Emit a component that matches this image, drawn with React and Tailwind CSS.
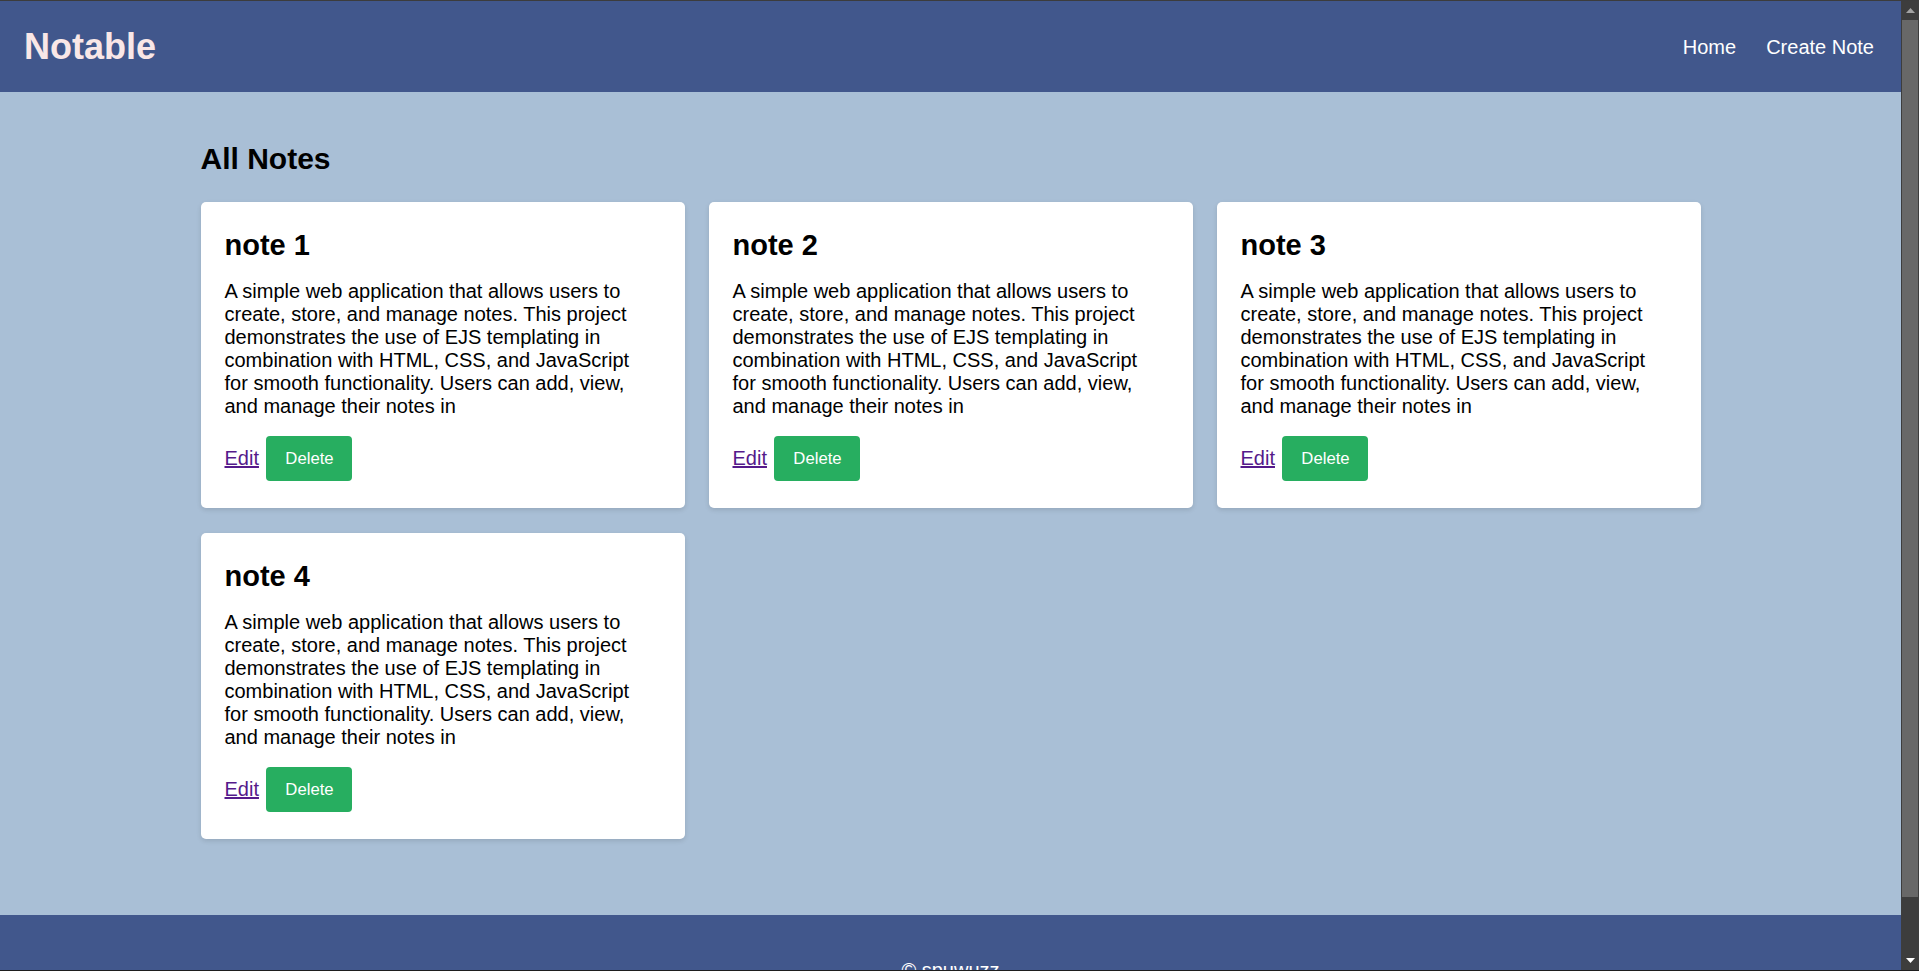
import React from "react";

const DESC =
  "A simple web application that allows users to create, store, and manage notes. This project demonstrates the use of EJS templating in combination with HTML, CSS, and JavaScript for smooth functionality. Users can add, view, and manage their notes in";

const notes = ["note 1", "note 2", "note 3", "note 4"];

function NoteCard({ title }) {
  return (
    <div className="bg-white rounded-[5px] shadow-[0_2px_5px_rgba(0,0,0,0.12)] px-6 pt-6 pb-[27px]">
      <h3 className="mt-[1.5px] text-[29px] leading-[34.5px] font-bold text-black">{title}</h3>
      <p className="mt-[18px] pr-[6px] text-[20px] leading-[23px] text-black">{DESC}</p>
      <div className="mt-[18px] flex items-center gap-[7.5px]">
        <a href="#" className="text-[20px] leading-[23px] text-[#551a8b] underline">
          Edit
        </a>
        <button className="h-[45px] w-[86px] flex items-center justify-center bg-[#27ae60] text-white text-[16.7px] rounded-[4px]">
          Delete
        </button>
      </div>
    </div>
  );
}

function Scrollbar() {
  return (
    <div className="w-[18px] shrink-0 bg-[#3d3d3d] flex flex-col">
      <div className="h-[19px] shrink-0 flex items-center justify-center">
        <svg width="9" height="5" viewBox="0 0 9 5">
          <polygon points="0,5 4.5,0 9,5" fill="#a3a3a3" />
        </svg>
      </div>
      <div className="h-[877px] shrink-0 mx-[1px] bg-[#686868]" />
      <div className="flex-1" />
      <div className="h-[19px] shrink-0 flex items-center justify-center">
        <svg width="9" height="5" viewBox="0 0 9 5">
          <polygon points="0,0 9,0 4.5,5" fill="#ffffff" />
        </svg>
      </div>
    </div>
  );
}

export default function App() {
  return (
    <div className="h-screen flex flex-col bg-[#3c3c3c] font-['Liberation_Sans',Arial,sans-serif]">
      <div className="h-px shrink-0 bg-[#3c3c3c]" />
      <div className="flex-1 min-h-0 flex">
        <div className="flex-1 min-w-0 overflow-hidden bg-[#a9bfd6]">
          <header className="h-[91px] bg-[#41578c] flex items-center justify-between pl-6 pr-[27px]">
            <div className="text-[36px] font-bold text-[#f9e7e7]">Notable</div>
            <nav className="flex items-center gap-[30px] text-[20px] text-white">
              <a href="#">Home</a>
              <a href="#">Create Note</a>
            </nav>
          </header>
          <main className="pt-[50px] pb-[76px]">
            <div className="w-[1500px] mx-auto">
              <h2 className="text-[30px] leading-[34.5px] font-bold text-black mb-[25.5px]">All Notes</h2>
              <div className="grid grid-cols-3 gap-x-6 gap-y-[25px]">
                {notes.map((n) => (
                  <NoteCard key={n} title={n} />
                ))}
              </div>
            </div>
          </main>
          <footer className="bg-[#41578c] pt-[44px] pb-[50px] text-center text-white text-[20px] leading-[23px]">
            © spuwuzz
          </footer>
        </div>
        <Scrollbar />
      </div>
      <div className="h-px shrink-0 bg-[#1e1e1e]" />
    </div>
  );
}
